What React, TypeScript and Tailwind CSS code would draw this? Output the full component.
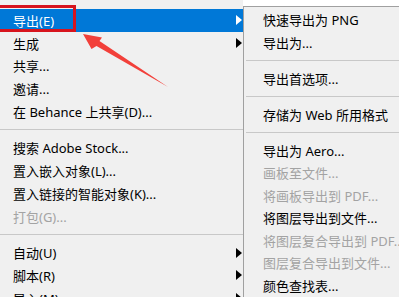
import React from 'react';

type Item = { label?: string; sep?: boolean; disabled?: boolean; arrow?: boolean; active?: boolean };

const mainItems: Item[] = [
	{ label: '导出(E)', arrow: true, active: true },
	{ label: '生成', arrow: true },
	{ label: '共享...' },
	{ label: '邀请...' },
	{ label: '在 Behance 上共享(D)...' },
	{ sep: true },
	{ label: '搜索 Adobe Stock...' },
	{ label: '置入嵌入对象(L)...' },
	{ label: '置入链接的智能对象(K)...' },
	{ label: '打包(G)...', disabled: true },
	{ sep: true },
	{ label: '自动(U)', arrow: true },
	{ label: '脚本(R)', arrow: true },
	{ label: '导入(M)', arrow: true },
];

const subItems: Item[] = [
	{ label: '快速导出为 PNG' },
	{ label: '导出为...' },
	{ sep: true },
	{ label: '导出首选项...' },
	{ sep: true },
	{ label: '存储为 Web 所用格式' },
	{ sep: true },
	{ label: '导出为 Aero...' },
	{ label: '画板至文件...', disabled: true },
	{ label: '将画板导出到 PDF...', disabled: true },
	{ label: '将图层导出到文件...' },
	{ label: '将图层复合导出到 PDF...', disabled: true },
	{ label: '图层复合导出到文件...', disabled: true },
	{ label: '颜色查找表...' },
];

function Arrow({ white }: { white?: boolean }) {
	return (
		<svg width="6" height="10" viewBox="0 0 6 10" className="shrink-0">
			<polygon points="0,0 6,5 0,10" fill={white ? '#ffffff' : '#000000'} />
		</svg>
	);
}

function MenuRow({ item, sub }: { item: Item; sub?: boolean }) {
	if (item.sep) {
		return (
			<div className={`h-[13.5px] shrink-0 flex items-center ${sub ? 'pl-[2px]' : ''}`}>
				<div className="w-full h-px bg-[#c8c8c8]" />
			</div>
		);
	}
	const color = item.active ? 'text-white bg-[#0078d7]' : item.disabled ? 'text-[#a3a3a3]' : 'text-black';
	return (
		<div
			className={`shrink-0 flex items-center justify-between whitespace-nowrap ${
				sub ? 'h-[22.5px] pl-[19px]' : 'h-[22.8px] pl-[13px] pr-[1px]'
			} ${color}`}
		>
			<span className="pt-[2px]">{item.label}</span>
			{item.arrow && <Arrow white={item.active} />}
		</div>
	);
}

export default function App() {
	return (
		<div
			className="relative w-[399px] h-[297px] overflow-hidden bg-[#f0f0f0] flex text-[13px] leading-none"
			style={{ fontFamily: '"Noto Sans", "Noto Sans CJK SC", sans-serif' }}
		>
			<div className="w-[243px] shrink-0 pt-[9px] flex flex-col">
				{mainItems.map((it, i) => (
					<MenuRow key={i} item={it} />
				))}
			</div>

			<div className="flex-1 flex flex-col">
				<div className="h-[6px] bg-white shrink-0" />
				<div className="flex-1 border-t border-l border-[#a0a0a0] pt-[1.5px] flex flex-col">
					{subItems.map((it, i) => (
						<MenuRow key={i} item={it} sub />
					))}
				</div>
			</div>

			{/* highlight annotation */}
			<div className="absolute left-[-3px] top-[5px] w-[79px] h-[27px] border-[3px] border-[#d7141d]" />
			<svg className="absolute left-0 top-0" width="399" height="297" viewBox="0 0 399 297">
				<polygon
					points="83,34 102,37.5 99.5,41 168,87 96.5,46 91.5,49"
					fill="#f2403a"
				/>
			</svg>
		</div>
	);
}
